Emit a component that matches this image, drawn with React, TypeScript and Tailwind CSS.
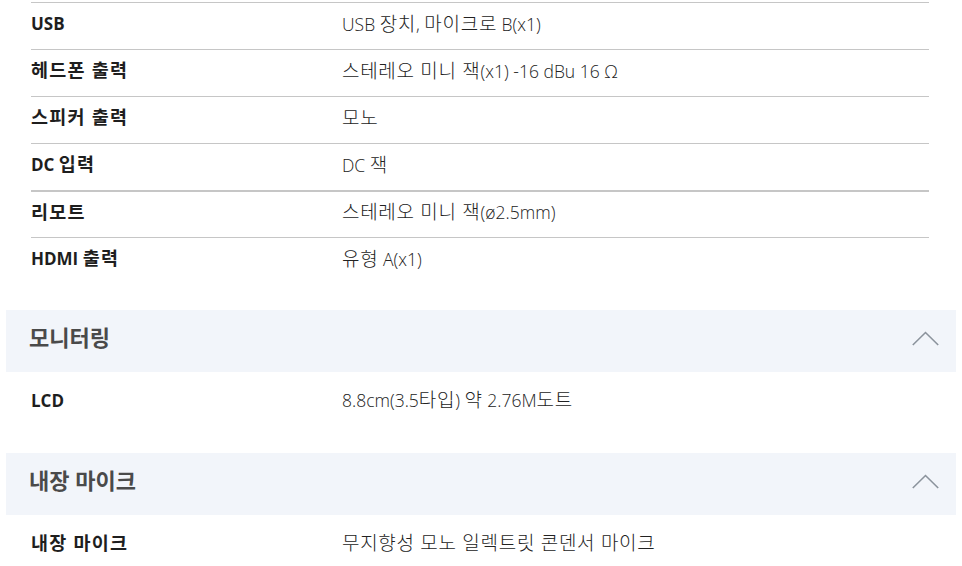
const FONT = "font-['Open_Sans','Noto_Sans_CJK_KR',sans-serif]";

type Row = { label: string; value: string; thick?: boolean };

const PORTS: Row[] = [
  { label: 'USB', value: 'USB 장치, 마이크로 B(x1)' },
  { label: '헤드폰 출력', value: '스테레오 미니 잭(x1) -16 dBu 16 Ω' },
  { label: '스피커 출력', value: '모노' },
  { label: 'DC 입력', value: 'DC 잭' },
  { label: '리모트', value: '스테레오 미니 잭(ø2.5mm)', thick: true },
  { label: 'HDMI 출력', value: '유형 A(x1)' },
];

// hangul in the source font sits a bit larger than the latin glyphs
function Ko({ text, size = 'text-[19px] tracking-[0.7px]' }: { text: string; size?: string }) {
  const parts = text.split(/([\uAC00-\uD7A3]+(?:\s[\uAC00-\uD7A3]+)*)/);
  return (
    <>
      {parts.map((p, i) =>
        /[\uAC00-\uD7A3]/.test(p) ? (
          <span key={i} className={`${size} leading-none`}>
            {p}
          </span>
        ) : (
          <span key={i}>{p}</span>
        ),
      )}
    </>
  );
}

function SpecRow({ label, value, thick, bordered = true }: Row & { bordered?: boolean }) {
  return (
    <div
      className={`flex items-center h-[47px] ${bordered ? (thick ? 'border-t-2 pb-[4px]' : 'border-t pb-[4px]') : ''} border-[#c6c6c6]`}
    >
      <div className="w-[311px] shrink-0 text-[17px] font-bold text-[#1e1e1e]">
        <Ko text={label} size="text-[18.5px] tracking-[1.2px]" />
      </div>
      <div className="text-[17.5px] font-light text-[#222]">
        <Ko text={value} />
      </div>
    </div>
  );
}

function SectionHeader({ title }: { title: string }) {
  return (
    <div className="mx-[6px] h-[62px] bg-[#f2f5fa] flex items-center justify-between pl-[23px] pr-[17px]">
      <h3 className="text-[20px] font-bold text-[#4a4a4a] pb-[4px]">
        <Ko text={title} size="text-[22px]" />
      </h3>
      <svg width="27" height="15" viewBox="0 0 27 15" fill="none" className="-mt-[5px]">
        <path d="M0.8 14L13.5 1.5L26.2 14" stroke="#8b939c" strokeWidth="1.6" />
      </svg>
    </div>
  );
}

export default function App() {
  return (
    <div className={`w-[962px] h-[566px] bg-white overflow-hidden ${FONT}`}>
      <div className="mt-[2px] ml-[31px] w-[898px]">
        {PORTS.map((r) => (
          <SpecRow key={r.label} {...r} />
        ))}
      </div>

      <div className="mt-[26px]">
        <SectionHeader title="모니터링" />
        <div className="ml-[31px] w-[898px] h-[57px] flex flex-col justify-center">
          <SpecRow label="LCD" value="8.8cm(3.5타입) 약 2.76M도트" bordered={false} />
        </div>
      </div>

      <div className="mt-[24px]">
        <SectionHeader title="내장 마이크" />
        <div className="ml-[31px] w-[898px] h-[57px] flex flex-col justify-center">
          <SpecRow label="내장 마이크" value="무지향성 모노 일렉트릿 콘덴서 마이크" bordered={false} />
        </div>
      </div>
    </div>
  );
}
